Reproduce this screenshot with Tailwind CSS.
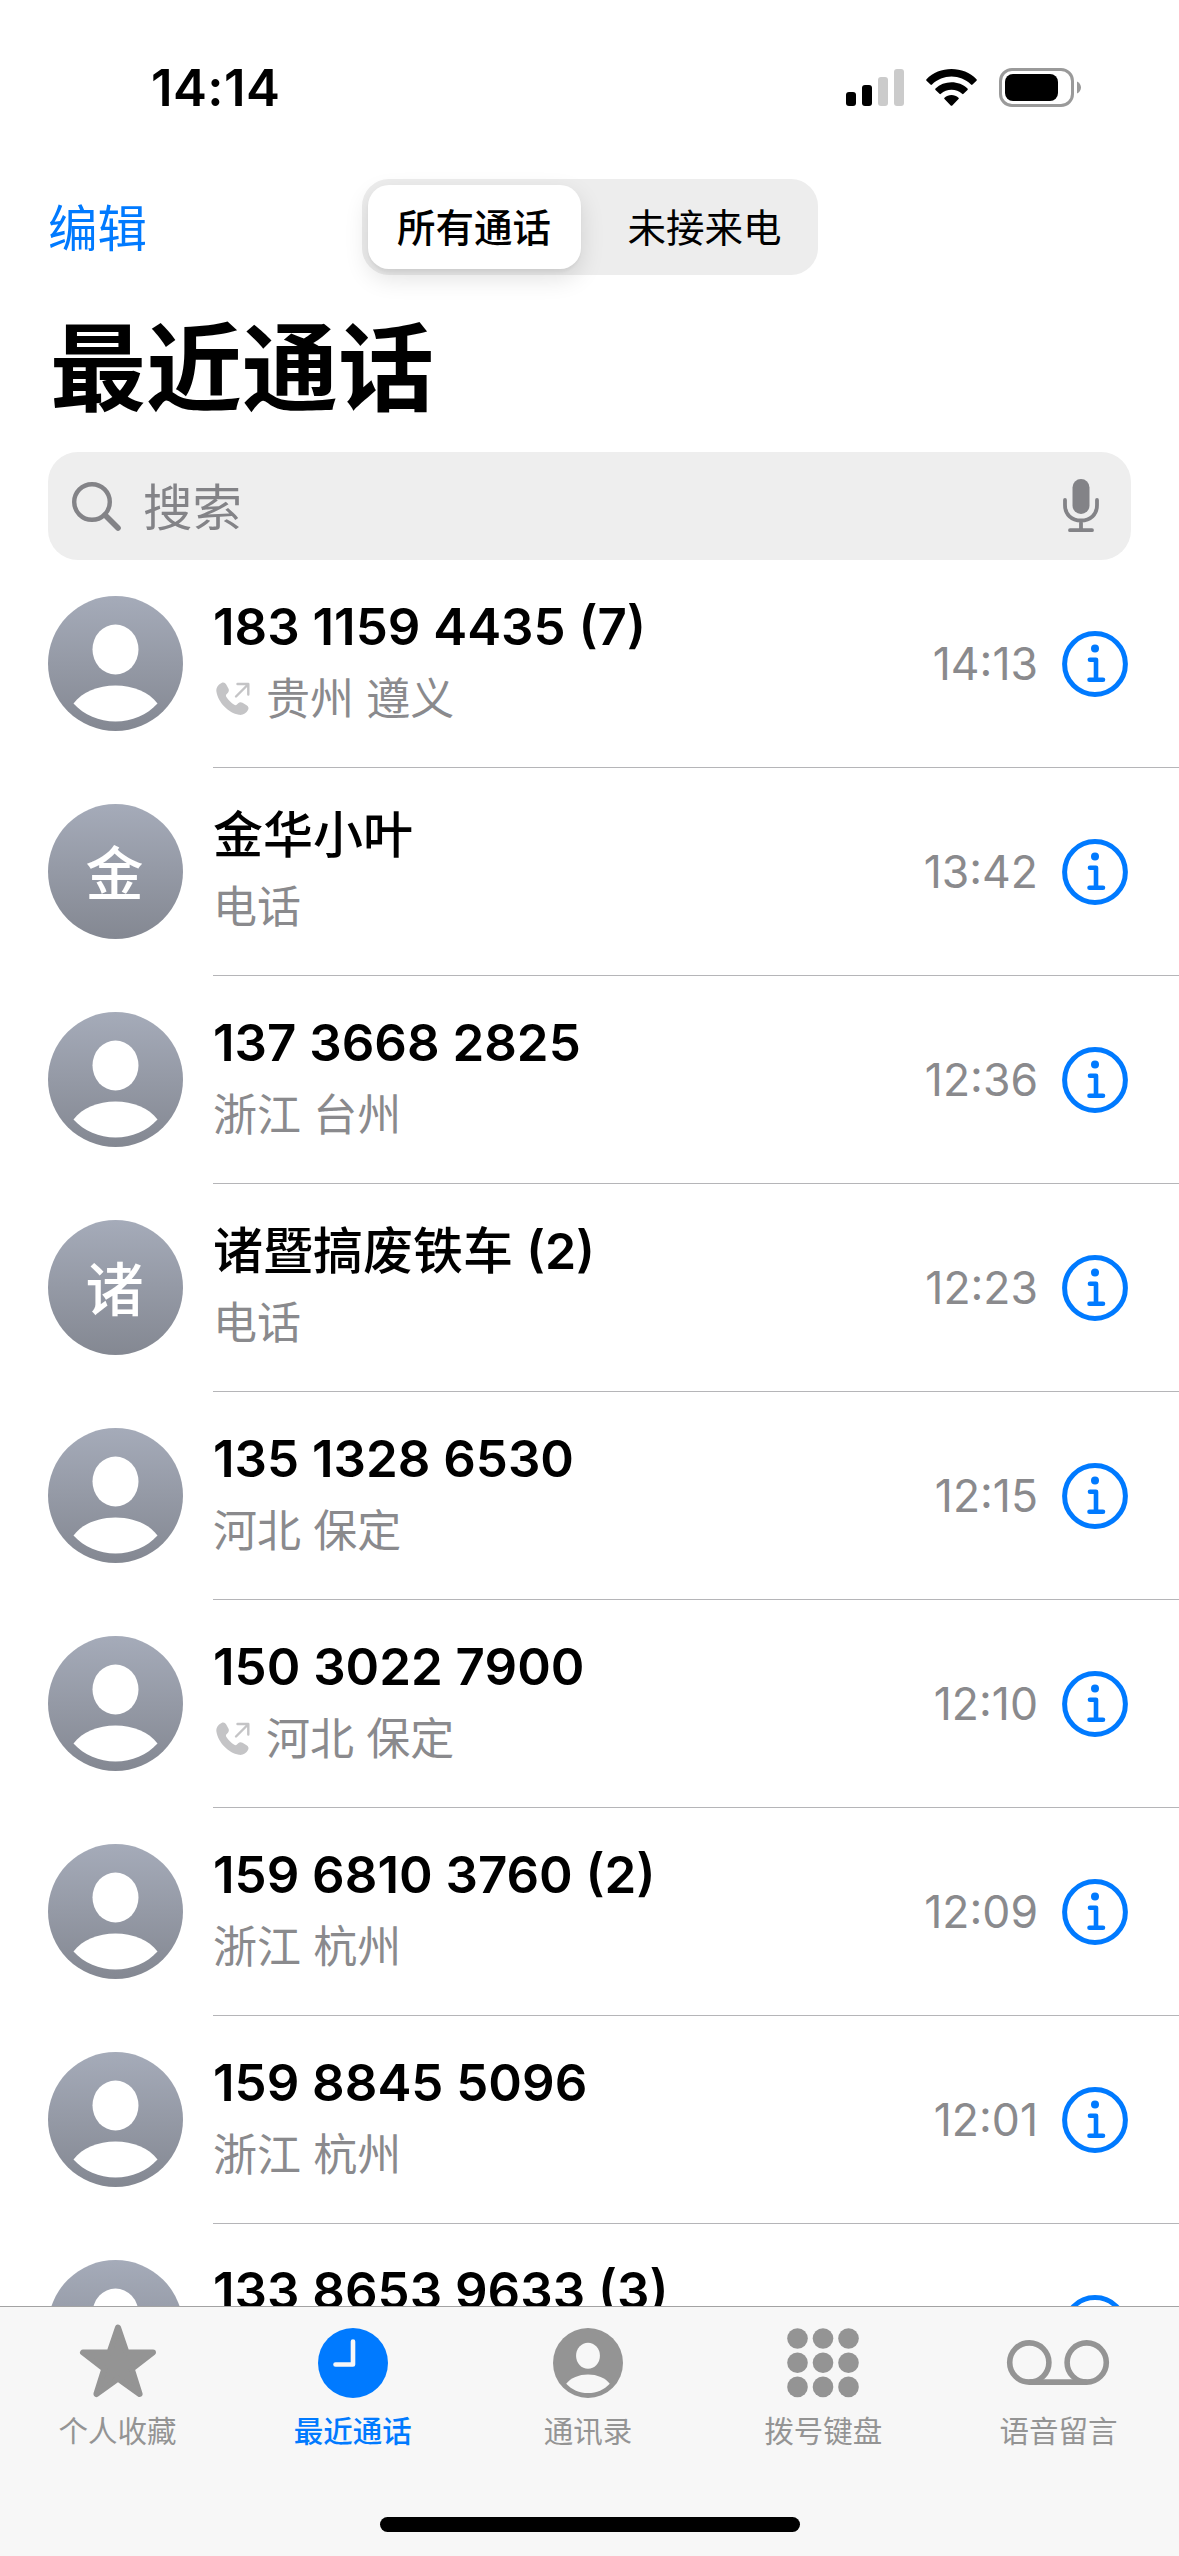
<!DOCTYPE html>
<html lang="zh-CN">
    <head>
        <meta charset="UTF-8" />
        <meta name="viewport" content="width=device-width, initial-scale=1.0" />
        <title>最近通话</title>
        <script src="https://cdn.jsdelivr.net/npm/@tailwindcss/browser@4"></script>
    </head>
    <body class="bg-white">
        <!-- shared icons -->
        <svg class="absolute size-0">
            <defs>
                <linearGradient id="avatarFill" x1="0" y1="0" x2="0" y2="1">
                    <stop offset="0" stop-color="#a5abb9" />
                    <stop offset="1" stop-color="#848892" />
                </linearGradient>
            </defs>
            <symbol id="person" viewBox="0 0 135 135">
                <ellipse cx="67.5" cy="53.5" rx="23" ry="25" />
                <path d="M25.500 107.500C34 96 50 89.500 67.500 89.500S101 96 109.500 107.500C99 119 84 125.500 67.500 125.500S36 119 25.500 107.500Z" />
            </symbol>
            <symbol id="info" viewBox="0 0 66 66">
                <circle cx="33" cy="33" r="30.400" fill="none" stroke="currentColor" stroke-width="5" />
                <circle cx="33" cy="17.500" r="4" fill="currentColor" />
                <path d="M28 28.800H34V48.800M27.500 48.800H41" fill="none" stroke="currentColor" stroke-width="4.600" stroke-linecap="round" stroke-linejoin="round" />
            </symbol>
            <symbol id="outgoing" viewBox="0 0 34 34">
                <path d="M5.500 1C7.500 0 9.200 .8 10.200 2.600L12.400 6.500C13.300 8.200 12.900 9.600 11.700 10.900L10.500 12.200C9.800 13 9.800 13.900 10.400 14.900C12.300 17.900 15.200 20.800 18.300 22.800C19.300 23.400 20.200 23.300 20.900 22.600L22.200 21.300C23.500 20.100 24.900 19.900 26.500 20.800L30.600 23.200C32.600 24.500 33 26.300 32 28C30.300 31.300 27 33.300 23 32.800C12.500 31 2 20.300 .4 9.500C0 5.800 2 2.800 5.500 1Z" fill="currentColor" />
                <path d="M20 14.500L32 2.500M21.500 2H32.300V12.500" fill="none" stroke="currentColor" stroke-width="2.400" stroke-linecap="round" stroke-linejoin="round" />
            </symbol>
        </svg>

        <div class="flex h-[2556px] w-[1179px] flex-col overflow-hidden bg-white font-['Inter','Noto_Sans_CJK_SC',sans-serif] text-black">
            <!-- status bar -->
            <div class="flex h-[179px] shrink-0 items-start justify-between pt-[58px] pr-[98px] pl-[151px]">
                <span class="text-[51px] leading-[60px] font-semibold tracking-[0.4px]">14:14</span>
                <div class="flex pt-[10px]">
                    <svg class="h-[39px] w-[58px]" viewBox="0 0 58 39">
                        <rect x="0" y="24" width="10" height="14" rx="3" />
                        <rect x="16" y="17" width="10" height="21" rx="3" />
                        <rect x="32" y="9" width="10" height="29" rx="3" fill="#cbcbcb" />
                        <rect x="48" y="1" width="10" height="37" rx="3" fill="#cbcbcb" />
                    </svg>
                    <svg class="ml-[22px] h-[39px] w-[51px]" viewBox="0 0 51 39">
                        <path d="M25.500 1C35 1 44 4.500 50.500 11.200Q51.200 12 50.500 12.700L46.500 16.600Q45.800 17.200 45 16.500C39.500 11.400 32.800 8.600 25.500 8.600S11.500 11.400 6 16.500Q5.200 17.200 4.500 16.600L.5 12.700Q-.2 12 .5 11.200C7 4.500 16 1 25.500 1Z" />
                        <path d="M25.500 14.200C31.500 14.200 37.200 16.400 41.500 20.500Q42.200 21.200 41.500 22L37.500 25.800Q36.900 26.500 36.100 25.800C33.200 23.200 29.500 21.700 25.500 21.700S17.800 23.200 14.900 25.800Q14.100 26.500 13.500 25.800L9.500 22Q8.800 21.200 9.500 20.500C13.800 16.400 19.500 14.200 25.500 14.200Z" />
                        <path d="M25.500 27C28 27 30.500 28 32.500 29.700Q33.300 30.400 32.500 31.100L26.300 37.500Q25.500 38.200 24.700 37.500L18.500 31.100Q17.700 30.400 18.500 29.700C20.500 28 23 27 25.500 27Z" />
                    </svg>
                    <svg class="ml-[22px] h-[39px] w-[82px]" viewBox="0 0 82 39">
                        <rect x="1.500" y="1.500" width="72" height="36" rx="11.500" fill="none" stroke="#9a9a9a" stroke-width="3" />
                        <rect x="6" y="6" width="53" height="27" rx="8" />
                        <path d="M78 13.500C80.500 14.700 82 17 82 19.500S80.500 24.300 78 25.500Z" fill="#9a9a9a" />
                    </svg>
                </div>
            </div>

            <!-- nav -->
            <div class="grid h-24 shrink-0 grid-cols-[1fr_456px_1fr] items-center px-12">
                <a class="pt-[3px] text-[49.5px] leading-[60px] text-[#007aff]">编辑</a>
                <div class="flex h-24 rounded-[27px] bg-[#ededed] p-1.5 text-[38.5px] leading-[48px] font-medium">
                    <div class="flex w-[213px] items-center justify-center rounded-[21px] bg-white pt-0.5 shadow-[0_9px_24px_rgba(0,0,0,0.12),0_3px_3px_rgba(0,0,0,0.04)]">所有通话</div>
                    <div class="flex flex-1 items-center justify-center pt-0.5 pl-[17px] font-normal">未接来电</div>
                </div>
            </div>
            <h1 class="h-[177px] shrink-0 px-[50px] pt-[36px] text-[96px] leading-[115px] font-bold">最近通话</h1>

            <!-- search -->
            <div class="mx-12 flex h-[108px] shrink-0 items-center rounded-[30px] bg-[#eeeeee] pr-8 pl-6 text-[#838387]">
                <svg class="size-[49px]" viewBox="0 0 49 49" fill="none" stroke="currentColor" stroke-linecap="round">
                    <circle cx="20" cy="20" r="17.800" stroke-width="4.400" />
                    <path d="M33 33L46 46" stroke-width="5.600" />
                </svg>
                <span class="ml-[22px] flex-1 pt-[3px] text-[49.5px] leading-[60px]">搜索</span>
                <svg class="h-[54px] w-9" viewBox="0 0 36 54" fill="none" stroke="currentColor" stroke-width="3.800" stroke-linecap="round">
                    <rect x="9.500" y="0" width="17" height="35" rx="8.500" fill="currentColor" stroke="none" />
                    <path d="M2 21V26C2 35.500 8.500 41.500 18 41.500S34 35.500 34 26V21M18 42V51M7 51.200H29" />
                </svg>
            </div>

            <!-- calls -->
            <ul id="calls" class="min-h-0 flex-1 overflow-hidden"></ul>

            <!-- tab bar -->
            <div class="flex h-[250px] shrink-0 flex-col items-center border-t border-[#a3a3a3] bg-[#f7f7f7]">
                <div class="grid h-[210px] w-full grid-cols-5 pr-[3px] text-[29.5px] leading-9 text-[#949494]">
                    <div class="flex flex-col items-center gap-[9px] pt-[15px]">
                        <svg class="h-[82px] w-20" viewBox="0 0 80 82" fill="currentColor" stroke="currentColor" stroke-width="6" stroke-linejoin="round">
                            <path d="M40 5.500L48.500 30.500H75L53.700 47L61.600 72L40 56.600L18.400 72L26.300 47L5 30.500H31.500Z" />
                        </svg>
                        <span>个人收藏</span>
                    </div>
                    <div class="flex flex-col items-center gap-[9px] pt-[15px] font-medium text-[#007aff]">
                        <svg class="h-[82px] w-20" viewBox="0 0 80 82">
                            <circle cx="40" cy="41" r="35" fill="currentColor" />
                            <path d="M40 19.500V42.500H22.500" fill="none" stroke="#f7f7f7" stroke-width="4.600" stroke-linecap="round" stroke-linejoin="round" />
                        </svg>
                        <span>最近通话</span>
                    </div>
                    <div class="flex flex-col items-center gap-[9px] pt-[15px]">
                        <svg class="h-[82px] w-20" viewBox="0 0 80 82">
                            <circle cx="40" cy="41" r="35" fill="currentColor" />
                            <use href="#person" x="5" y="6" width="70" height="70" fill="#f7f7f7" />
                        </svg>
                        <span>通讯录</span>
                    </div>
                    <div class="flex flex-col items-center gap-[9px] pt-[15px]">
                        <svg class="h-[82px] w-20" viewBox="0 0 80 82" fill="currentColor">
                            <circle cx="14.500" cy="16.500" r="10.300" />
                            <circle cx="40" cy="16.500" r="10.300" />
                            <circle cx="65.500" cy="16.500" r="10.300" />
                            <circle cx="14.500" cy="40.700" r="10.300" />
                            <circle cx="40" cy="40.700" r="10.300" />
                            <circle cx="65.500" cy="40.700" r="10.300" />
                            <circle cx="14.500" cy="64.900" r="10.300" />
                            <circle cx="40" cy="64.900" r="10.300" />
                            <circle cx="65.500" cy="64.900" r="10.300" />
                        </svg>
                        <span>拨号键盘</span>
                    </div>
                    <div class="flex flex-col items-center gap-[9px] pt-[15px]">
                        <svg class="h-[82px] w-[104px]" viewBox="0 0 104 82" fill="none" stroke="currentColor" stroke-width="5.600">
                            <circle cx="23.300" cy="40.500" r="19.600" />
                            <circle cx="80.700" cy="40.500" r="19.600" />
                            <path d="M23.300 60.100H80.700" />
                        </svg>
                        <span>语音留言</span>
                    </div>
                </div>
                <div class="h-[15px] w-[420px] rounded-full bg-black"></div>
            </div>
        </div>

        <script>
            const calls = [
                { name: "183 1159 4435 (7)", place: "贵州 遵义", time: "14:13", outgoing: true },
                { name: "金华小叶", place: "电话", time: "13:42", initial: "金" },
                { name: "137 3668 2825", place: "浙江 台州", time: "12:36" },
                { name: "诸暨搞废铁车 (2)", place: "电话", time: "12:23", initial: "诸" },
                { name: "135 1328 6530", place: "河北 保定", time: "12:15" },
                { name: "150 3022 7900", place: "河北 保定", time: "12:10", outgoing: true },
                { name: "159 6810 3760 (2)", place: "浙江 杭州", time: "12:09" },
                { name: "159 8845 5096", place: "浙江 杭州", time: "12:01" },
                { name: "133 8653 9633 (3)", place: "", time: "" },
            ];

            function avatar(call) {
                if (call.initial) {
                    return `<div class="flex size-[135px] items-center justify-center rounded-full bg-linear-to-b from-[#a5abb9] to-[#848892] pt-1 pr-0.5 text-[58px] leading-[68px] font-medium text-white">${call.initial}</div>`;
                }
                return `<svg class="size-[135px]" viewBox="0 0 135 135">
                    <circle cx="67.5" cy="67.5" r="67.5" fill="url(#avatarFill)" />
                    <use href="#person" width="135" height="135" fill="#fff" />
                </svg>`;
            }

            function row(call) {
                const icon = call.outgoing
                    ? `<svg class="mr-4 ml-[3px] size-[34px] text-[#c4c4c6]"><use href="#outgoing" /></svg>`
                    : "";
                const nameStyle = call.initial
                    ? "pt-px text-[50px] leading-[59px] font-medium"
                    : "text-[51px] leading-[60px] font-semibold";
                const name = call.name.replace(/\(\d+\)$/, `<span class="font-semibold">$&</span>`);
                return `<li class="flex h-[208px] pl-12">
                    <div class="w-[165px] shrink-0 pt-9">${avatar(call)}</div>
                    <div class="flex flex-1 border-b border-[#b5b5b8] pt-9 pr-[51px]">
                        <div class="flex-1 pt-px">
                            <div class="${nameStyle}">${name}</div>
                            <div class="mt-[15px] flex items-center text-[44px] leading-[54px] text-[#8a8a8d]">${icon}${call.place}</div>
                        </div>
                        <div class="flex h-[135px] items-center gap-6">
                            <span class="text-[44.5px] leading-[54px] text-[#8a8a8d]">${call.time}</span>
                            <svg class="size-[66px] text-[#007aff]"><use href="#info" /></svg>
                        </div>
                    </div>
                </li>`;
            }

            document.getElementById("calls").innerHTML = calls.map(row).join("");
        </script>
    </body>
</html>
